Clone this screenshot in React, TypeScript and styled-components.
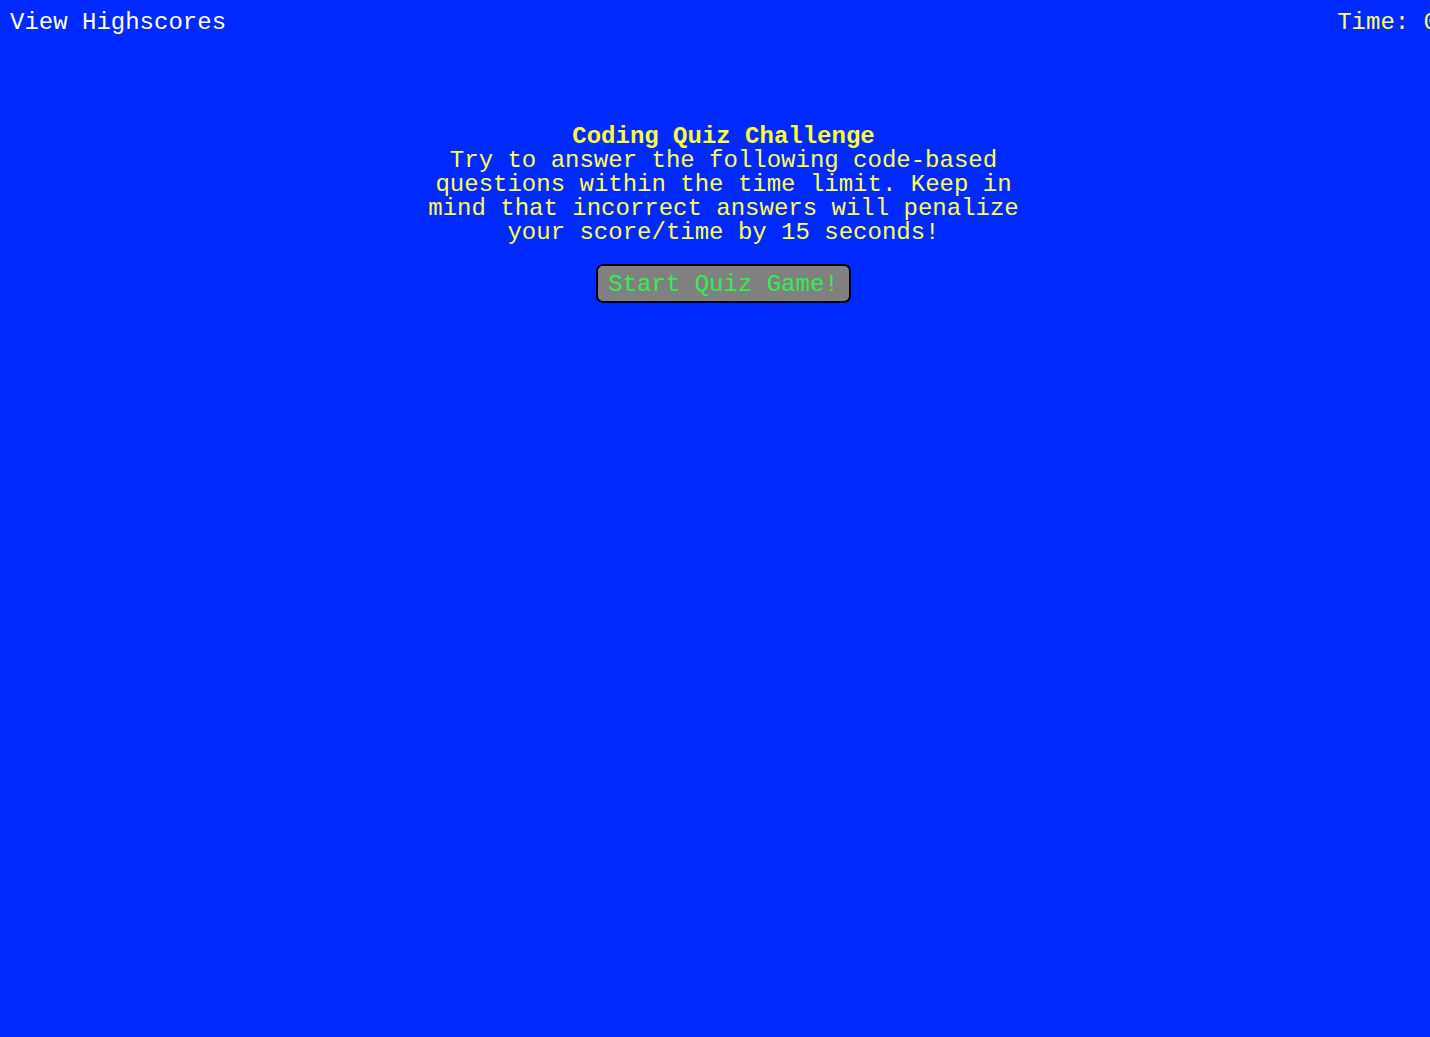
import React from "react";
import styled, { createGlobalStyle } from "styled-components";

const Global = createGlobalStyle`
  html, body { margin: 0; padding: 0; background: #0029ff; overflow: hidden; }
  body { font-family: "Liberation Mono", "Courier New", monospace; }
`;

const Page = styled.div`
  min-height: 1037px;
  background: #0029ff;
  overflow: hidden;
`;

const Header = styled.header`
  display: flex;
  justify-content: space-between;
  align-items: flex-start;
  padding: 10px 0 0 10px;
  margin-right: -8px;
  font-size: 24px;
  line-height: 26px;
`;

const HighscoreLink = styled.a`
  color: #ffffff;
  text-decoration: none;
  cursor: pointer;
`;

const Timer = styled.span`
  color: #ffff66;
  white-space: nowrap;
`;

const Main = styled.main`
  display: flex;
  flex-direction: column;
  align-items: center;
  padding: 89px 0 0 17px;
`;

const Card = styled.section`
  width: 600px;
  text-align: center;
  color: #ffff55;
  font-size: 24px;
  line-height: 24px;
`;

const Title = styled.h1`
  margin: 0;
  font-size: 24px;
  line-height: 24px;
  font-weight: bold;
  color: #ffff33;
`;

const Intro = styled.p`
  margin: 0;
`;

const StartButton = styled.button`
  margin-top: 19px;
  font-family: "Liberation Mono", "Courier New", monospace;
  font-size: 24px;
  line-height: 24px;
  color: #33ee55;
  background: #808080;
  border: 2px solid #000000;
  border-radius: 7px;
  padding: 7px 10px 4px;
  cursor: pointer;
`;

export default function App() {
  return (
    <Page>
      <Global />
      <Header>
        <HighscoreLink>View Highscores</HighscoreLink>
        <Timer>Time: 0</Timer>
      </Header>
      <Main>
        <Card>
          <Title>Coding Quiz Challenge</Title>
          <Intro>
            Try to answer the following code-based questions within the time
            limit. Keep in mind that incorrect answers will penalize your
            score/time by 15 seconds!
          </Intro>
        </Card>
        <StartButton>Start Quiz Game!</StartButton>
      </Main>
    </Page>
  );
}
